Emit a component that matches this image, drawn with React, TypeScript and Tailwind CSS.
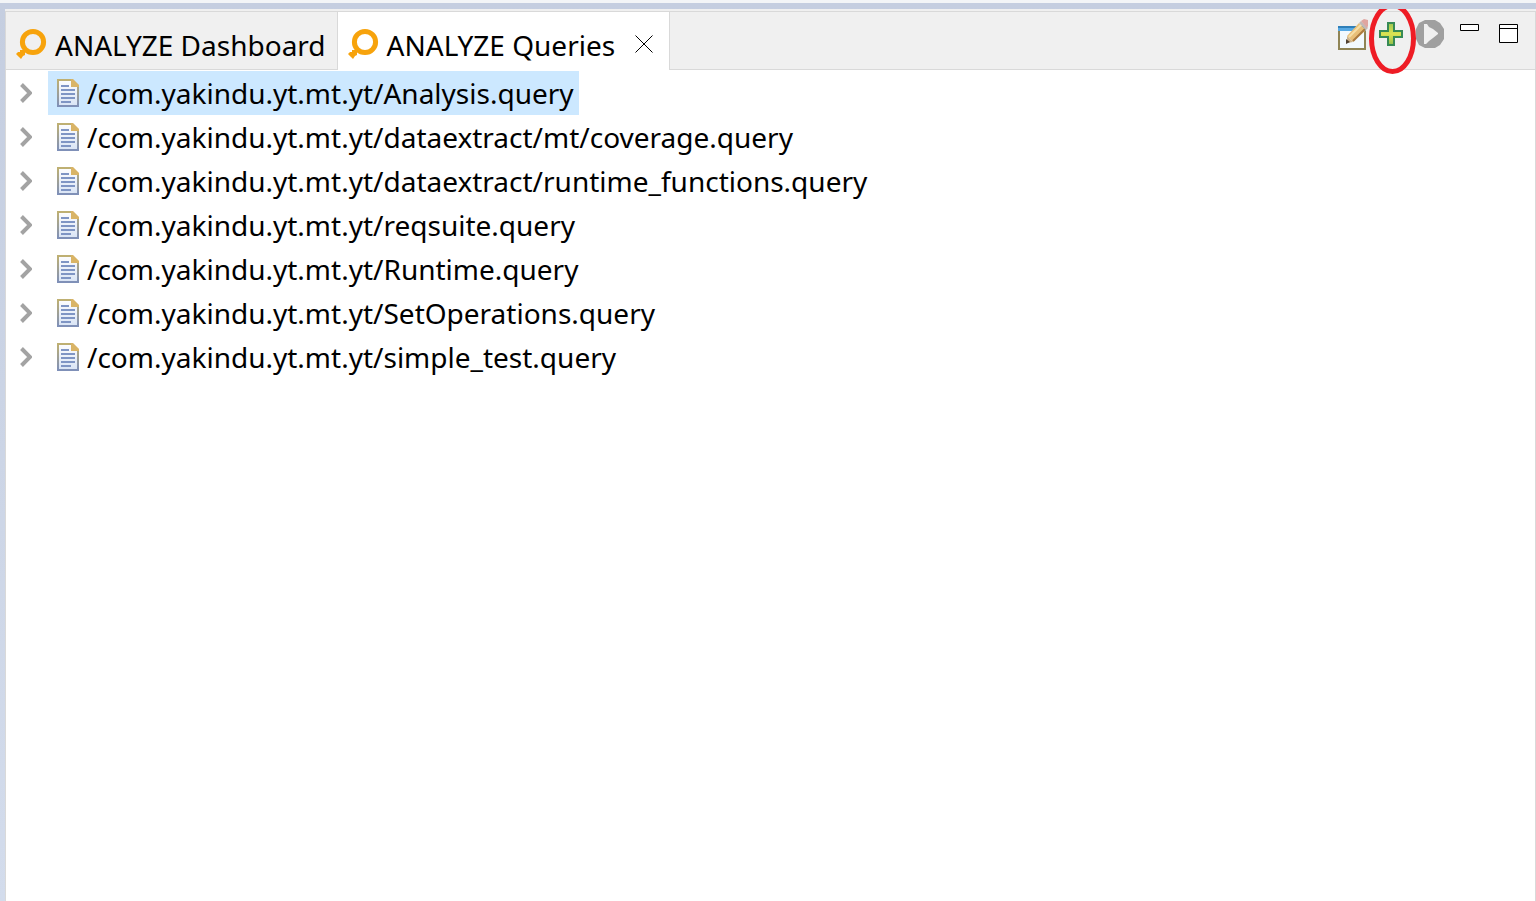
import { useState } from 'react'

const queries = [
  '/com.yakindu.yt.mt.yt/Analysis.query',
  '/com.yakindu.yt.mt.yt/dataextract/mt/coverage.query',
  '/com.yakindu.yt.mt.yt/dataextract/runtime_functions.query',
  '/com.yakindu.yt.mt.yt/reqsuite.query',
  '/com.yakindu.yt.mt.yt/Runtime.query',
  '/com.yakindu.yt.mt.yt/SetOperations.query',
  '/com.yakindu.yt.mt.yt/simple_test.query',
]

function AnalyzeIcon() {
  return (
    <svg width="32" height="32" viewBox="0 0 32 32" className="shrink-0" aria-hidden="true">
      <circle cx="17" cy="14" r="10.6" fill="none" stroke="#f7a30c" strokeWidth="5" />
      <path d="M4 22h4l1 1v4l-2 1-2 3-2-2-3-3 2-2h2z" fill="#f7a30c" />
    </svg>
  )
}

function FileIcon() {
  return (
    <svg width="22" height="28" viewBox="0 0 22 28" className="shrink-0" aria-hidden="true">
      <defs>
        <linearGradient id="edge" x1="0" y1="0" x2="0" y2="1">
          <stop offset="0" stopColor="#bfb072" />
          <stop offset="1" stopColor="#7f90b8" />
        </linearGradient>
        <linearGradient id="paper" x1="0" y1="0" x2="0" y2="1">
          <stop offset="0" stopColor="#fdfdfe" />
          <stop offset="1" stopColor="#d9e4f5" />
        </linearGradient>
      </defs>
      <path d="M1 1h14l6 6v20H1z" fill="url(#paper)" stroke="url(#edge)" strokeWidth="2" />
      <path d="M14 0h2l6 6v2h-8z" fill="#d9b466" />
      <path d="M4 7h8M4 11h14M4 15h14M4 19h14M4 23h10" stroke="#7f95c4" strokeWidth="2" />
    </svg>
  )
}

function NewQueryIcon() {
  return (
    <svg width="32" height="32" viewBox="0 0 32 32" aria-hidden="true">
      <path d="M1 9h26v22H1z" fill="#f2f9fe" stroke="#8f8455" strokeWidth="2" />
      <path d="M0 8h28v2H0z" fill="#2f7fb8" />
      <path d="M0 10h28v3H0z" fill="#57a9e4" />
      <path d="M9 18L21 5l7 7-13 12z" fill="#e8bf78" />
      <path d="M11 19L23 7" stroke="#f6dfa8" strokeWidth="2" />
      <path d="M15 23L27 11" stroke="#a9793f" strokeWidth="2" />
      <path d="M21 5l2-2 7 7-2 2z" fill="#c3b9b6" />
      <path d="M23 3l3-2 4 1v6l-1 2z" fill="#e0a5a0" />
      <path d="M9 18l6 6-6 1z" fill="#cdb28a" />
      <path d="M8 21l4 3-4 2z" fill="#4f4234" />
    </svg>
  )
}

function PlusIcon() {
  return (
    <svg width="24" height="24" viewBox="0 0 24 24" aria-hidden="true">
      <defs>
        <linearGradient id="plus" x1="0" y1="0" x2="0" y2="1">
          <stop offset="0" stopColor="#9cc651" />
          <stop offset="0.5" stopColor="#dbe352" />
          <stop offset="1" stopColor="#8fbf4c" />
        </linearGradient>
      </defs>
      <path d="M9 1h6v8h8v6h-8v8H9v-8H1V9h8z" fill="url(#plus)" stroke="#378a56" strokeWidth="2" />
    </svg>
  )
}

function Tree() {
  const [selected, setSelected] = useState(queries[0])

  return (
    <ul className="flex flex-col pt-px">
      {queries.map((query) => (
        <li key={query} className="flex h-11 items-center">
          <button aria-label={`Expand ${query}`} className="flex w-[42px] shrink-0 pl-3.5">
            <svg width="12" height="20" viewBox="0 0 12 20" aria-hidden="true">
              <path d="M1.5 1.5L10 10l-8.5 8.5" fill="none" stroke="#a3a3a3" strokeWidth="4" />
            </svg>
          </button>
          <button
            onClick={() => setSelected(query)}
            className={`flex h-11 items-center gap-2 pr-[5px] pl-[9px] ${selected === query ? 'bg-[#cce8ff]' : ''}`}
          >
            <FileIcon />
            <span className="whitespace-nowrap">{query}</span>
          </button>
        </li>
      ))}
    </ul>
  )
}

export default function App() {
  return (
    <div className="flex min-h-screen flex-col bg-[#f3f5f7] pt-[3px] font-['Noto_Sans','Open_Sans',sans-serif] text-[28px] leading-10 text-black">
      <div className="flex grow flex-col bg-linear-to-b from-[#c5cee0] to-[#d3dcec] pt-1.5 pl-[5px]">
        <div className="flex grow flex-col bg-[#f0f0f0] pt-0.5">
          <div className="flex grow flex-col border-x border-t border-[#d9d9d9] bg-white">
            <header className="flex h-[58px] bg-[#f0f0f0]">
              <div role="tablist" className="flex">
                <button
                  role="tab"
                  aria-selected="false"
                  className="flex items-center gap-[7px] border-r border-b border-[#d9d9d9] pt-1.5 pr-[11px] pl-2.5"
                >
                  <AnalyzeIcon />
                  <span className="whitespace-nowrap pt-0.5">ANALYZE Dashboard</span>
                </button>
                <div className="flex items-center border-r border-[#d9d9d9] bg-white pt-1.5 pl-2.5">
                  <button role="tab" aria-selected="true" className="flex items-center gap-[7px]">
                    <AnalyzeIcon />
                    <span className="whitespace-nowrap pt-0.5">ANALYZE Queries</span>
                  </button>
                  <button aria-label="Close" className="pr-4 pl-5">
                    <svg width="18" height="18" viewBox="0 0 18 18" aria-hidden="true">
                      <path d="M.5.5l17 17M17.5.5l-17 17" stroke="#000" />
                    </svg>
                  </button>
                </div>
              </div>
              <div className="flex grow items-start justify-end border-b border-[#d9d9d9] pr-[17px]">
                <button aria-label="New query" className="mt-1.5 mr-[9px]">
                  <NewQueryIcon />
                </button>
                <button aria-label="Add" className="relative mt-2.5 mr-[13px]">
                  <PlusIcon />
                  {/* highlight ring, cut off at the top edge of the view */}
                  <svg
                    width="48"
                    height="66"
                    viewBox="0 9 48 66"
                    className="pointer-events-none absolute -top-[13px] -left-2.5"
                    aria-hidden="true"
                  >
                    <ellipse cx="23.5" cy="38.5" rx="21" ry="33" fill="none" stroke="#ee1c25" strokeWidth="5" />
                  </svg>
                </button>
                <button aria-label="Run" className="mt-2 mr-4">
                  <svg width="28" height="28" viewBox="0 0 28 28" aria-hidden="true">
                    <path d="M9 0h10l5 3 4 6v10l-4 6-5 3H9l-6-3-3-6V9l3-6z" fill="#a0a0a0" />
                    <path d="M8 4h3l2 3 4 2 5 4v1l-5 4-4 3-3 3H8z" fill="#f0f0f0" />
                  </svg>
                </button>
                <button aria-label="Minimize" className="mt-3 mr-5">
                  <svg width="19" height="7" viewBox="0 0 19 7" aria-hidden="true">
                    <path d="M.5.5h18v6H.5z" fill="#fff" stroke="#000" />
                  </svg>
                </button>
                <button aria-label="Maximize" className="mt-3">
                  <svg width="19" height="19" viewBox="0 0 19 19" aria-hidden="true">
                    <path d="M.5.5h18v18H.5zM.5 4.5h18" fill="#fff" stroke="#000" />
                  </svg>
                </button>
              </div>
            </header>
            <Tree />
          </div>
        </div>
      </div>
    </div>
  )
}
